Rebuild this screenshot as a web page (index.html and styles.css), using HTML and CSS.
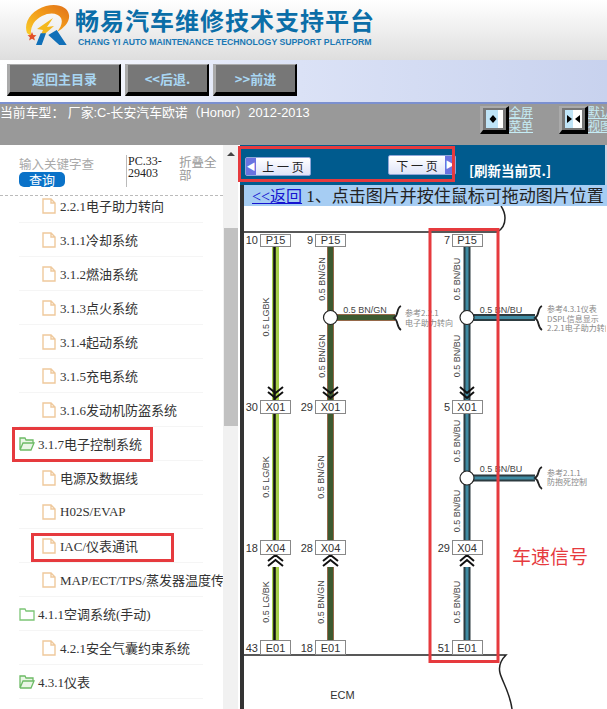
FILE: index.html
```html
<!DOCTYPE html>
<html lang="zh-CN">
<head>
  <meta charset="UTF-8" />
  <meta name="viewport" content="width=device-width, initial-scale=1.0"/>
  <title>畅易汽车维修技术支持平台</title>
  <link rel="stylesheet" href="styles.css">
</head>
<body>

  <svg class="defs" width="0" height="0">
    <defs>
      <linearGradient id="ring" x1="0" y1="1" x2="1" y2="0">
        <stop offset="0" stop-color="#f9cf2a"/>
        <stop offset="0.55" stop-color="#f29a1a"/>
        <stop offset="1" stop-color="#e0701a"/>
      </linearGradient>
    </defs>
    <symbol id="doc" viewBox="0 0 14 16">
      <path d="M1 1h8l4 4v10H1z M9 1v4h4" fill="#fff" stroke="#efc99c" stroke-width="1.4"/>
    </symbol>
    <symbol id="folder" viewBox="0 0 16 14">
      <path d="M1 13V2h5l1 2h8v9z" fill="#fff" stroke="#7cc576" stroke-width="1.3"/>
    </symbol>
    <symbol id="folder-open" viewBox="0 0 16 14">
      <path d="M1 13V1h5l1 2h7v3H4z M1 13h11l3-7H4" fill="#eaf6e6" stroke="#6dbb66" stroke-width="1.3"/>
    </symbol>
  </svg>

  <header class="top">
    <svg class="logo" width="46" height="44" viewBox="0 0 46 44">
      <path fill-rule="evenodd" d="M3 29C-1 18 8 6 22 2c12-3 22 1 23 9 1 7-5 13-12 17 4-5 6-10 4-14-3-5-11-6-19-2C10 16 6 23 7 32z" fill="url(#ring)"/>
      <path d="M13 25l16-11-6 9 7-1-15 13 4-9z" fill="#f4b81c"/>
      <path d="M12 41l4.700-11.700h5.300L17.700 41zM24.300 31l8.400-5 10 15h-7.400z" fill="#1170b8"/>
      <path d="M8 28l1.300 3 3.200.3-2.400 2 .8 3.200-2.900-1.700-2.900 1.700.8-3.200-2.400-2 3.200-.3z" fill="#e2502a"/>
    </svg>
    <div class="brand">
      <div class="brand-cn">畅易汽车维修技术支持平台</div>
      <div class="brand-en">CHANG YI AUTO MAINTENANCE TECHNOLOGY SUPPORT PLATFORM</div>
    </div>
  </header>

  <div class="toolbar">
    <a class="tool-btn wide" href="#">返回主目录</a>
    <a class="tool-btn" href="#">&lt;&lt;后退.</a>
    <a class="tool-btn" href="#">&gt;&gt;前进</a>
  </div>

  <div class="infobar">
    <div class="model">当前车型： 厂家:C-长安汽车欧诺（Honor）2012-2013</div>
    <div class="view-switch first">
      <span class="view-btn"><svg width="17" height="18" viewBox="0 0 17 18"><rect width="12" height="18" fill="#bfe4f7"/><rect x="12" width="5" height="18" fill="#fff"/><path d="M7 5l3.500 4L7 13 3.500 9z" fill="#000"/></svg></span>
      <a href="#">全屏<br>菜单</a>
    </div>
    <div class="view-switch">
      <span class="view-btn"><svg width="17" height="18" viewBox="0 0 17 18"><rect width="8" height="18" fill="#bfe4f7"/><rect x="8" width="9" height="18" fill="#fff"/><path d="M2 5l5 4-5 4zM15 5l-5 4 5 4z" fill="#000"/></svg></span>
      <a href="#">默认<br>视图</a>
    </div>
  </div>

  <div class="main">
    <aside class="side">
      <div class="side-tools">
        <div class="search">
          <div class="search-input">输入关键字查询</div>
          <span class="search-btn">查询</span>
        </div>
        <div class="pc-code">PC.33-29403</div>
        <a class="collapse" href="#">折叠全部</a>
      </div>
      <ul class="tree">
        <li class="leaf"><svg class="ico"><use href="#doc"/></svg>2.2.1电子助力转向</li>
        <li class="leaf"><svg class="ico"><use href="#doc"/></svg>3.1.1冷却系统</li>
        <li class="leaf"><svg class="ico"><use href="#doc"/></svg>3.1.2燃油系统</li>
        <li class="leaf"><svg class="ico"><use href="#doc"/></svg>3.1.3点火系统</li>
        <li class="leaf"><svg class="ico"><use href="#doc"/></svg>3.1.4起动系统</li>
        <li class="leaf"><svg class="ico"><use href="#doc"/></svg>3.1.5充电系统</li>
        <li class="leaf"><svg class="ico"><use href="#doc"/></svg>3.1.6发动机防盗系统</li>
        <li class="branch"><svg class="ico-folder"><use href="#folder-open"/></svg>3.1.7电子控制系统<span class="mark mark-branch"></span></li>
        <li class="leaf"><svg class="ico"><use href="#doc"/></svg>电源及数据线</li>
        <li class="leaf"><svg class="ico"><use href="#doc"/></svg>H02S/EVAP</li>
        <li class="leaf"><svg class="ico"><use href="#doc"/></svg>IAC/仪表通讯<span class="mark mark-leaf"></span></li>
        <li class="leaf"><svg class="ico"><use href="#doc"/></svg>MAP/ECT/TPS/蒸发器温度传感器</li>
        <li class="branch"><svg class="ico-folder"><use href="#folder"/></svg>4.1.1空调系统(手动)</li>
        <li class="leaf"><svg class="ico"><use href="#doc"/></svg>4.2.1安全气囊约束系统</li>
        <li class="branch"><svg class="ico-folder"><use href="#folder-open"/></svg>4.3.1仪表</li>
      </ul>
    </aside>

    <div class="scrollbar">
      <div class="scroll-arrow"></div>
      <div class="scroll-thumb"></div>
    </div>

    <section class="viewer">
      <div class="pager">
        <a class="page-btn prev" href="#"><span class="page-arrow">&#9664;</span><span class="page-text">上 一 页</span></a>
        <a class="page-btn next" href="#"><span class="page-text">下 一 页</span><span class="page-arrow">&#9654;</span></a>
        <a class="refresh" href="#">[刷新当前页.]</a>
        <span class="pager-mark"></span>
      </div>
      <div class="viewer-body">
        <div class="hint"><a href="#">&lt;&lt;返回</a> 1、点击图片并按住鼠标可拖动图片位置</div>
        <div class="diagram">
          <svg width="362" height="503" viewBox="245 206 362 503">
            <!-- ECM outline -->
            <path class="frame" d="M245 232H498c6-3 8-8 8-14 0-5-2-9-4-12"/>
            <path class="frame" d="M245 655H507c-4 4-8 10-6 18 2 8 10 20 12 36"/>

            <!-- wires -->
            <path class="w1-out" d="M276.500 247V400M276.500 413V540M276.500 567V641"/>
            <path class="w1-in" d="M275.500 247V400M275.500 413V540M275.500 567V641"/>
            <path class="w2-out" d="M331.500 247V400M331.500 413V540M331.500 567V641M331.500 317.500H396"/>
            <path class="w2-in" d="M331.500 247V400M331.500 413V540M331.500 567V641M331.500 317.500H396"/>
            <path class="w3-out" d="M468 247V400M468 413V540M468 567V641M468 317.500H536M468 478H536"/>
            <path class="w3-in" d="M468 247V400M468 413V540M468 567V641M468 317.500H536M468 478H536"/>

            <!-- chevrons -->
            <path class="chev" d="M269 387l7.500 6 7.500-6M269 392l7.500 6 7.500-6M324 387l7.500 6 7.500-6M324 392l7.500 6 7.500-6M461 387l7 6 7-6M461 392l7 6 7-6"/>
            <path class="chev" d="M269 561l7.500-6 7.500 6M269 566l7.500-6 7.500 6M324 561l7.500-6 7.500 6M324 566l7.500-6 7.500 6M461 561l7-6 7 6M461 566l7-6 7 6"/>

            <!-- splices and braces -->
            <circle class="splice" cx="331.500" cy="317.500" r="7"/>
            <circle class="splice" cx="468" cy="317.500" r="7"/>
            <circle class="splice" cx="468" cy="478" r="7"/>
            <path class="brace" d="M402 306c-5 2-2 9-7 12 5 3 2 9 7 12"/>
            <path class="brace" d="M543 306c-5 2-2 9-7 12 5 3 2 9 7 12"/>
            <path class="brace" d="M543 467c-5 2-2 8-7 11 5 3 2 8 7 11"/>

            <!-- connectors -->
            <g class="conn">
              <rect x="261.500" y="234.500" width="30" height="12"/><rect x="316.500" y="234.500" width="30" height="12"/><rect x="453.500" y="234.500" width="30" height="12"/>
              <rect x="261.500" y="400.500" width="30" height="13"/><rect x="316.500" y="400.500" width="30" height="13"/><rect x="453.500" y="400.500" width="30" height="13"/>
              <rect x="261.500" y="540.500" width="30" height="14"/><rect x="316.500" y="540.500" width="30" height="14"/><rect x="453.500" y="540.500" width="30" height="14"/>
              <rect x="261.500" y="640.500" width="30" height="14"/><rect x="316.500" y="640.500" width="30" height="14"/><rect x="453.500" y="640.500" width="30" height="14"/>
            </g>
            <g class="conn-name">
              <text x="276.500" y="244">P15</text><text x="331.500" y="244">P15</text><text x="468" y="244">P15</text>
              <text x="276.500" y="411">X01</text><text x="331.500" y="411">X01</text><text x="468" y="411">X01</text>
              <text x="276.500" y="552">X04</text><text x="331.500" y="552">X04</text><text x="468" y="552">X04</text>
              <text x="276.500" y="652">E01</text><text x="331.500" y="652">E01</text><text x="468" y="652">E01</text>
            </g>
            <g class="pin">
              <text x="259" y="244">10</text><text x="314" y="244">9</text><text x="451" y="244">7</text>
              <text x="259" y="411">30</text><text x="314" y="411">29</text><text x="451" y="411">5</text>
              <text x="259" y="552">18</text><text x="314" y="552">28</text><text x="451" y="552">29</text>
              <text x="259" y="652">43</text><text x="314" y="652">18</text><text x="451" y="652">51</text>
            </g>

            <!-- wire labels -->
            <g class="wire-label">
              <text transform="translate(270 317) rotate(-90)">0.5 LGBK</text>
              <text transform="translate(326 279) rotate(-90)">0.5 BN/GN</text>
              <text transform="translate(326 356) rotate(-90)">0.5 BN/GN</text>
              <text transform="translate(461 279) rotate(-90)">0.5 BN/BU</text>
              <text transform="translate(461 356) rotate(-90)">0.5 BN/BU</text>
              <text transform="translate(461 441) rotate(-90)">0.5 BN/BU</text>
              <text transform="translate(461 511) rotate(-90)">0.5 BN/BU</text>
              <text transform="translate(270 477) rotate(-90)">0.5 LG/BK</text>
              <text transform="translate(325 477) rotate(-90)">0.5 BN/GN</text>
              <text transform="translate(270 602) rotate(-90)">0.5 LG/BK</text>
              <text transform="translate(325 602) rotate(-90)">0.5 BN/GN</text>
              <text transform="translate(461 602) rotate(-90)">0.5 BN/BU</text>
              <text x="366" y="313">0.5 BN/GN</text>
              <text x="502" y="313">0.5 BN/BU</text>
              <text x="502" y="472">0.5 BN/BU</text>
            </g>

            <!-- references -->
            <g class="ref">
              <text x="406" y="316">参考2.2.1</text>
              <text x="406" y="326">电子助力转向</text>
              <text x="548" y="312">参考4.3.1仪表</text>
              <text x="548" y="322">DSPL信息显示</text>
              <text x="548" y="331">2.2.1电子助力转向</text>
              <text x="548" y="476">参考2.1.1</text>
              <text x="548" y="485">防抱死控制</text>
            </g>

            <text class="ecm" x="343.500" y="699">ECM</text>
            <rect class="callout" x="431" y="229.500" width="68" height="432"/>
            <text class="callout-text" x="513" y="564">车速信号</text>
          </svg>
        </div>
      </div>
    </section>
  </div>

</body>
</html>
```

FILE: styles.css
```css
html, body {
  margin: 0;
  height: 709px;
  overflow: hidden;
}
body {
  font-family: "Liberation Sans", "Noto Sans CJK SC", sans-serif;
  background: #fff;
  color: #333;
}
a {
  color: inherit;
}
.defs {
  position: absolute;
}

/* header */
.top {
  height: 60px;
  display: flex;
  align-items: flex-start;
  padding-left: 24px;
  background: linear-gradient(#fff, #dedede);
}
.logo {
  margin-top: 4px;
}
.brand {
  margin-left: 5px;
  padding-top: 5px;
}
.brand-cn {
  font-family: "Noto Sans CJK SC", sans-serif;
  font-size: 24px;
  font-weight: 700;
  line-height: 29px;
  letter-spacing: 1px;
  color: #0b6ea8;
  white-space: nowrap;
}
.brand-en {
  margin: 3px 0 0 3px;
  font-size: 8.700px;
  font-weight: 700;
  line-height: 11px;
  color: #1a78b4;
  white-space: nowrap;
}

/* toolbar */
.toolbar {
  height: 44px;
  box-sizing: border-box;
  display: flex;
  gap: 4px;
  padding: 4px 0 0 7px;
  background: linear-gradient(90deg, #fff 0, #f3f5fc 100px, #dbe2f6 300px, #c8d2ee 100%);
  border-bottom: 2px solid #7b90d0;
}
.tool-btn {
  width: 84px;
  height: 32px;
  box-sizing: border-box;
  display: flex;
  align-items: center;
  justify-content: center;
  background: #777;
  border-style: solid;
  border-width: 1px 2px 4px 3px;
  border-color: #aaa #000 #000 #aaa;
  font-family: "Noto Sans CJK SC", sans-serif;
  font-size: 13px;
  font-weight: 700;
  color: #a9d6f2;
  text-decoration: none;
}
.tool-btn.wide {
  width: 114px;
}

/* car model row */
.infobar {
  height: 41px;
  box-sizing: border-box;
  display: flex;
  background: #999;
  color: #fff;
  font-size: 12px;
}
.model {
  flex: 1;
  padding-top: 1px;
  font-size: 12.850px;
  line-height: 15px;
  white-space: nowrap;
}
.view-switch {
  width: 79px;
  display: flex;
  padding-top: 2px;
  overflow: hidden;
}
.view-switch:last-child {
  width: 48px;
}
.view-btn {
  flex: none;
  width: 29px;
  height: 28px;
  box-sizing: border-box;
  display: flex;
  align-items: center;
  justify-content: center;
  background: #777;
  border-style: solid;
  border-width: 2px 3px 4px 3px;
  border-color: #aaa #000 #000 #aaa;
}
.view-switch a {
  flex: none;
  width: 26px;
  margin-top: -1px;
  font-family: "Noto Sans CJK SC", sans-serif;
  line-height: 14px;
  color: #c5ecf5;
}

/* main */
.main {
  height: 564px;
  display: flex;
}
.side {
  width: 223px;
  flex: none;
  overflow: hidden;
  white-space: nowrap;
}
.side-tools {
  height: 51px;
  margin-bottom: 1px;
  display: flex;
  box-sizing: border-box;
  padding: 10px 0 0 19px;
  border-bottom: 1px dashed #bbb;
  position: relative;
  z-index: 1;
  background: #fff;
}
.search {
  width: 107px;
  flex: none;
}
.search-input {
  width: 75px;
  overflow: hidden;
  font-family: "Noto Sans CJK SC", sans-serif;
  font-size: 12.500px;
  line-height: 17px;
  color: #aaa;
}
.search-btn {
  display: block;
  width: 46px;
  height: 15px;
  border-radius: 5px;
  background: #0a72c8;
  color: #fff;
  font-family: "Noto Sans CJK SC", sans-serif;
  font-size: 13px;
  line-height: 15px;
  text-align: center;
}
.pc-code {
  width: 41px;
  height: 32px;
  flex: none;
  box-sizing: border-box;
  padding-left: 1px;
  border-left: 1px solid #bbb;
  font-family: "Liberation Serif", serif;
  font-size: 12px;
  line-height: 12px;
  white-space: normal;
  color: #222;
}
.collapse {
  margin-left: 12px;
  width: 40px;
  font-family: "Noto Sans CJK SC", sans-serif;
  font-size: 12.500px;
  line-height: 13px;
  white-space: normal;
  color: #999;
  text-decoration: none;
}
.tree {
  list-style: none;
  margin: -8px 20px 0 19px;
  padding: 0;
  font-family: "Liberation Serif", "Noto Sans CJK SC", serif;
  font-size: 13px;
  color: #333;
}
.tree li {
  position: relative;
  height: 34px;
  box-sizing: border-box;
  display: flex;
  align-items: center;
  border-bottom: 1px solid #f5f5f5;
}
.leaf {
  padding-left: 23px;
}
.ico {
  width: 14px;
  height: 16px;
  margin-right: 4px;
  flex: none;
}
.ico-folder {
  width: 16px;
  height: 14px;
  margin-right: 3px;
  flex: none;
}
.mark {
  position: absolute;
  box-sizing: border-box;
  border: 3px solid #e63a3e;
}
.mark-branch {
  left: -7px;
  top: 0;
  width: 141px;
  height: 35px;
}
.mark-leaf {
  left: 12px;
  top: 4px;
  width: 143px;
  height: 29px;
}

.scrollbar {
  width: 15px;
  flex: none;
  background: #f1f1f1;
  position: relative;
}
.scroll-arrow {
  position: absolute;
  left: 4px;
  top: 7px;
  border: 4px solid transparent;
  border-top: 0;
  border-bottom: 4px solid #444;
}
.scroll-thumb {
  position: absolute;
  left: 1px;
  right: 0;
  top: 83px;
  height: 198px;
  background: #c1c1c1;
}

/* right pane */
.viewer {
  flex: 1;
  min-width: 0;
  margin-left: 2px;
}
.pager {
  position: relative;
  height: 40px;
  background: #005b8e;
  border-right: 2px solid #c9d3e4;
  box-sizing: border-box;
}
.page-btn {
  position: absolute;
  display: flex;
  align-items: center;
  height: 19px;
  box-sizing: border-box;
  background: linear-gradient(#fff, #dfe4f8);
  border: 1px solid #8fa6d8;
  border-radius: 2px;
  color: #222;
  font-family: "Noto Sans CJK SC", sans-serif;
  font-size: 12px;
  text-decoration: none;
}
.prev {
  left: 5px;
  top: 12px;
  width: 66px;
}
.next {
  left: 148px;
  top: 10px;
  width: 68px;
  height: 20px;
}
.page-arrow {
  width: 10px;
  height: 100%;
  flex: none;
  background: #6a73e0;
  color: #fff;
  font-size: 9px;
  line-height: 17px;
  text-align: center;
}
.page-text {
  flex: 1;
  text-align: center;
}
.refresh {
  position: absolute;
  left: 229px;
  top: 16px;
  color: #fff;
  font-family: "Noto Sans CJK SC", sans-serif;
  font-size: 13.500px;
  font-weight: 700;
  line-height: 18px;
  text-decoration: none;
  white-space: nowrap;
}
.pager-mark {
  position: absolute;
  left: -2px;
  top: 1px;
  width: 217px;
  height: 36px;
  box-sizing: border-box;
  border: 3px solid #e63a3e;
}
.viewer-body {
  height: 524px;
  box-sizing: border-box;
  border-left: 4px solid #333;
}
.hint {
  height: 21px;
  padding-left: 8px;
  background: #a6cdf3;
  font-family: "Liberation Serif", "Noto Sans CJK SC", serif;
  font-size: 17px;
  line-height: 23px;
  color: #222;
  white-space: nowrap;
  overflow: hidden;
}
.hint a {
  font-size: 16px;
  color: #1414d0;
}
.diagram svg {
  display: block;
}

/* diagram */
.frame {
  fill: none;
  stroke: #222;
  stroke-width: 1.500;
}
.w1-out { fill: none; stroke: #a8d04a; stroke-width: 7; }
.w1-in { fill: none; stroke: #111; stroke-width: 2.500; }
.w2-out { fill: none; stroke: #96694a; stroke-width: 7; }
.w2-in { fill: none; stroke: #3d5a30; stroke-width: 5; }
.w3-out { fill: none; stroke: #2c3b40; stroke-width: 7; }
.w3-in { fill: none; stroke: #3f8ba3; stroke-width: 3; }
.chev {
  fill: none;
  stroke: #111;
  stroke-width: 2;
}
.splice {
  fill: #fff;
  stroke: #222;
  stroke-width: 1.200;
}
.brace {
  fill: none;
  stroke: #222;
  stroke-width: 1.800;
}
.conn rect {
  fill: #fff;
  stroke: #888;
}
.conn-name text {
  font-size: 11px;
  fill: #333;
  text-anchor: middle;
}
.pin text {
  font-size: 11px;
  fill: #333;
  text-anchor: end;
}
.wire-label text {
  font-size: 9px;
  fill: #444;
  text-anchor: middle;
}
.ref text {
  font-family: "Noto Sans CJK SC", sans-serif;
  font-size: 8px;
  fill: #888;
}
.ecm {
  font-size: 11px;
  fill: #333;
  text-anchor: middle;
}
.callout {
  fill: none;
  stroke: #e63a3e;
  stroke-width: 3;
}
.callout-text {
  font-family: "Noto Sans CJK SC", sans-serif;
  font-size: 19px;
  fill: #e63a3e;
}
```
